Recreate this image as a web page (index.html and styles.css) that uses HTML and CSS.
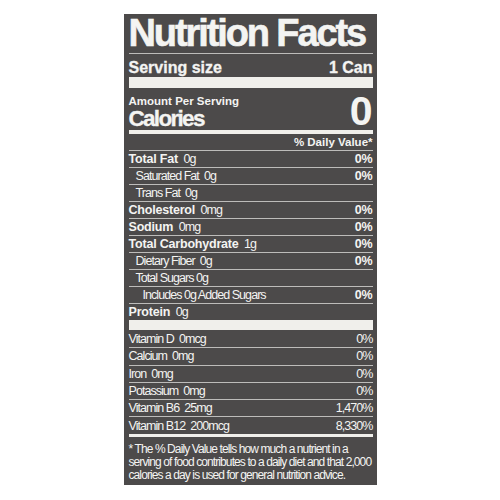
FILE: index.html
```html
<!DOCTYPE html>
<html lang="en">
<head>
	<meta charset="utf-8">
	<title>Nutrition Facts</title>
	<meta name="viewport" content="width=device-width, initial-scale=1">
	<link rel="stylesheet" href="styles.css">
</head>
<body>
	<div class="label">
		<h1 class="title">Nutrition Facts</h1>
		<div class="serving">
			<span>Serving size</span>
			<span>1 Can</span>
		</div>
		<div class="bar bar_thick"></div>
		<div class="calories">
			<div>
				<div class="aps">Amount Per Serving</div>
				<div class="cal">Calories</div>
			</div>
			<div class="cal_num">0</div>
		</div>
		<div class="bar bar_mid"></div>
		<div class="row dv">% Daily Value*</div>
		<div class="row"><span><b>Total Fat</b> <i>0g</i></span><b>0%</b></div>
		<div class="row ind"><span>Saturated Fat&nbsp; 0g</span><b>0%</b></div>
		<div class="row ind"><span>Trans Fat&nbsp; 0g</span></div>
		<div class="row"><span><b>Cholesterol</b> <i>0mg</i></span><b>0%</b></div>
		<div class="row"><span><b>Sodium</b> <i>0mg</i></span><b>0%</b></div>
		<div class="row"><span><b>Total Carbohydrate</b> <i>1g</i></span><b>0%</b></div>
		<div class="row ind"><span>Dietary Fiber&nbsp; 0g</span><b>0%</b></div>
		<div class="row ind"><span>Total Sugars 0g</span></div>
		<div class="row ind2"><span>Includes 0g Added Sugars</span><b>0%</b></div>
		<div class="row last"><span><b>Protein</b> <i>0g</i></span></div>
		<div class="bar bar_thick2"></div>
		<div class="vitamins">
			<div class="row"><span>Vitamin D&nbsp; 0mcg</span><span>0%</span></div>
			<div class="row"><span>Calcium&nbsp; 0mg</span><span>0%</span></div>
			<div class="row"><span>Iron&nbsp; 0mg</span><span>0%</span></div>
			<div class="row"><span>Potassium&nbsp; 0mg</span><span>0%</span></div>
			<div class="row"><span>Vitamin B6&nbsp; 25mg</span><span>1,470%</span></div>
			<div class="row last"><span>Vitamin B12&nbsp; 200mcg</span><span>8,330%</span></div>
		</div>
		<div class="bar bar_thin"></div>
		<p class="foot">* The % Daily Value tells how much a nutrient in a<br>serving of food contributes to a daily diet and that 2,000<br>calories a day is used for general nutrition advice.</p>
	</div>
</body>
</html>
```

FILE: styles.css
```css
body {
	margin: 0;
	background: #fff;
}
.label {
	box-sizing: border-box;
	width: 253px;
	height: 471px;
	margin: 14px auto 0;
	padding: 0 4px 0 5px;
	background: #4c4a4a;
	color: #f4f4f2;
	font-family: "Liberation Sans", Arial, sans-serif;
}
.title {
	margin: 0;
	height: 39px;
	font-weight: 700;
	font-size: 38px;
	line-height: 38px;
	letter-spacing: -2.1px;
	-webkit-text-stroke: 0.6px #f4f4f2;
	white-space: nowrap;
	border-bottom: 1px solid #bdbcba;
}
.serving {
	display: flex;
	justify-content: space-between;
	align-items: flex-end;
	height: 23px;
	font-weight: 700;
	font-size: 16px;
	line-height: 19px;
	-webkit-text-stroke: 0.3px #f4f4f2;
}
.bar {
	background: #f0efeb;
}
.bar_thick {
	height: 11px;
}
.bar_thick2 {
	height: 10px;
}
.bar_mid {
	height: 4px;
}
.bar_thin {
	height: 3px;
}
.calories {
	display: flex;
	justify-content: space-between;
	align-items: flex-end;
	height: 42px;
	font-weight: 700;
}
.aps {
	font-size: 11.5px;
	line-height: 14px;
}
.cal {
	font-size: 22.5px;
	line-height: 22px;
	letter-spacing: -1.7px;
	-webkit-text-stroke: 0.3px #f4f4f2;
}
.cal_num {
	font-size: 41px;
	line-height: 38px;
}
.row {
	display: flex;
	justify-content: space-between;
	align-items: center;
	height: 16px;
	border-bottom: 1px solid #bdbcba;
	font-size: 12.5px;
	line-height: 16px;
	letter-spacing: -0.95px;
	white-space: nowrap;
}
.row b {
	font-size: 12.5px;
	letter-spacing: -0.2px;
}
.row i {
	font-style: normal;
	margin-left: 3px;
}
.row.last {
	border-bottom: none;
}
.dv {
	justify-content: flex-end;
	font-weight: 700;
	font-size: 11.5px;
	letter-spacing: 0;
	align-items: flex-end;
}
.ind span {
	padding-left: 7px;
}
.ind2 span {
	padding-left: 14px;
}
.vitamins {
	padding-top: 1px;
}
.vitamins .row {
	height: 16.3px;
}
.foot {
	margin: 0;
	padding-top: 6px;
	font-size: 12px;
	line-height: 13.3px;
	letter-spacing: -0.9px;
	white-space: nowrap;
}
```
